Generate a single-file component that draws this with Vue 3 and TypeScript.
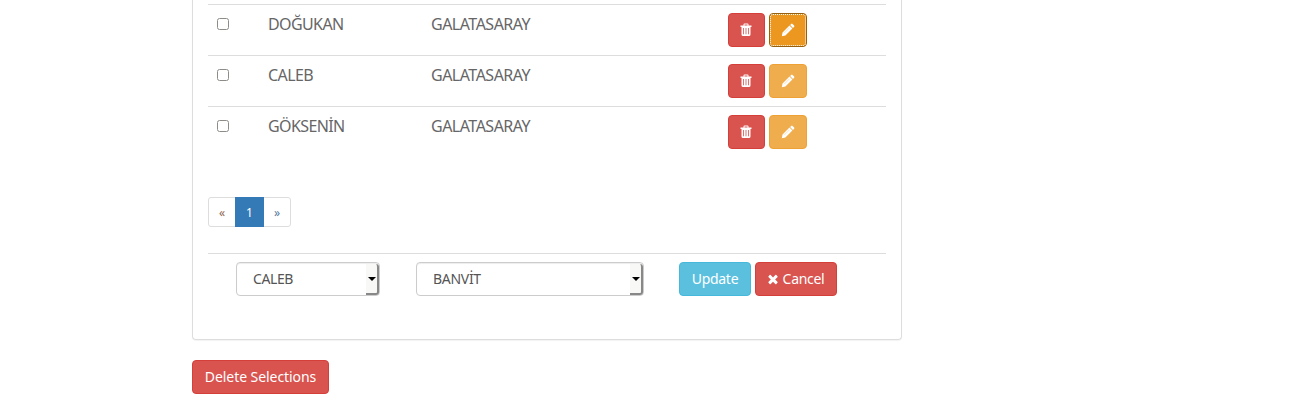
<script setup lang="ts">
import { ref } from 'vue'

interface Player {
  name: string
  team: string
  focused?: boolean
}

const players: Player[] = [
  { name: 'DOĞUKAN', team: 'GALATASARAY', focused: true },
  { name: 'CALEB', team: 'GALATASARAY' },
  { name: 'GÖKSENİN', team: 'GALATASARAY' },
]
const player = ref('CALEB')
const team = ref('BANVİT')
</script>

<template>
  <main class="page">
    <section class="panel">
      <div class="rows">
        <div v-for="p in players" :key="p.name" class="row">
          <input type="checkbox" class="check" />
          <span class="name">{{ p.name }}</span>
          <span class="team">{{ p.team }}</span>
          <div class="actions">
            <button class="btn danger trash" aria-label="Delete">
              <svg class="icon" viewBox="0 0 14 14">
                <path fill-rule="evenodd" d="M1.500 2.500H4.500V1.500Q4.500 .5 5.500 .5H8.500Q9.500 .5 9.500 1.500V2.500H12.500V4H11.500V11.500Q11.500 13 10 13H4Q2.500 13 2.500 11.500V4H1.500ZM5.500 2.500H8.500V1.500H5.500ZM4.200 5V11.200H5V5ZM6.600 5V11.200H7.400V5ZM9 5V11.200H9.800V5Z" />
              </svg>
            </button>
            <button class="btn warning" :class="{ focused: p.focused }" aria-label="Edit">
              <svg class="icon" viewBox="0 0 14 14">
                <path d="M.8 13.200 1.500 9.600 8.500 2.600 11.400 5.500 4.400 12.500ZM9.100 2 10.200.9Q10.900.3 11.600.9L13.100 2.400Q13.700 3.100 13.100 3.800L12 4.900Z" />
                <path class="shade" d="M3.400 9.900 8.600 4.700" />
              </svg>
            </button>
          </div>
        </div>
      </div>

      <nav class="pagination">
        <a class="prev">«</a>
        <a class="current">1</a>
        <a class="next">»</a>
      </nav>

      <form class="edit" @submit.prevent>
        <label class="select player">
          <select v-model="player"><option>CALEB</option></select>
          <span class="drop"></span>
        </label>
        <label class="select club">
          <select v-model="team"><option>BANVİT</option></select>
          <span class="drop"></span>
        </label>
        <button class="btn info">Update</button>
        <button class="btn danger cancel">
          <svg class="icon times" viewBox="0 0 1792 1792"><path d="M1490 1322q0 40-28 68l-136 136q-28 28-68 28t-68-28l-294-294-294 294q-28 28-68 28t-68-28l-136-136q-28-28-28-68t28-68l294-294-294-294q-28-28-28-68t28-68l136-136q28-28 68-28t68 28l294 294 294-294q28-28 68-28t68 28l136 136q28 28 28 68t-28 68l-294 294 294 294q28 28 28 68z" /></svg>
          <span>Cancel</span>
        </button>
      </form>
    </section>
    <button class="btn danger delete">Delete Selections</button>
  </main>
</template>

<style>
body {
  background: #fff;
  overflow: hidden;
}
</style>

<style scoped>
* {
  box-sizing: border-box;
}
.page {
  margin-left: 192px;
  font-family: "Noto Sans", "Open Sans", sans-serif;
  font-size: 14px;
  color: #333;
}
.panel {
  width: 710px;
  height: 340px;
  padding: 4px 15px 0;
  border: 1px solid #ddd;
  border-top: 0;
  border-radius: 0 0 4px 4px;
  box-shadow: 0 1px 1px rgba(0, 0, 0, 0.05);
}
.row {
  display: grid;
  grid-template-columns: 60px 163px 297px 1fr;
  height: 51px;
  padding-top: 8px;
  border-top: 1px solid #ddd;
  font-size: 16px;
  line-height: 23px;
  color: #666;
}
.check {
  appearance: none;
  width: 12px;
  height: 12px;
  margin: 5px 0 0 9px;
  border: 1px solid #8e8c87;
  border-radius: 2.5px;
  background: #fff;
}
.name {
  letter-spacing: -0.6px;
}
.team {
  letter-spacing: -0.5px;
}
.actions {
  display: flex;
  gap: 4px;
}
.btn {
  display: flex;
  align-items: center;
  justify-content: center;
  height: 34px;
  padding: 0;
  border: 1px solid;
  border-radius: 4px;
  color: #fff;
  font: 14px/20px "Noto Sans", "Open Sans", sans-serif;
  letter-spacing: -0.3px;
  white-space: nowrap;
}
.danger {
  background: #d9534f;
  border-color: #d43f3a;
}
.trash {
  width: 37px;
  padding-right: 1px;
}
.warning {
  width: 38px;
  background: #f0ad4e;
  border-color: #eea236;
}
.warning.focused {
  background: #ec971f;
  border-color: #985f0d;
  outline: 1px dotted #fff;
  outline-offset: -2px;
}
.icon {
  width: 14px;
  height: 14px;
  fill: #fff;
}
.shade {
  fill: none;
  stroke: #f0ad4e;
  stroke-width: 0.8;
  opacity: 0.45;
}
.pagination {
  display: flex;
  width: 83px;
  height: 30px;
  margin-top: 40px;
  border: 1px solid #ddd;
  border-radius: 3px;
  font-size: 12px;
  line-height: 30px;
  text-align: center;
  color: #337ab7;
}
.prev {
  width: 26px;
  color: #8c6650;
}
.next {
  width: 26px;
  color: #55779a;
}
.current {
  width: 29px;
  margin: -1px 0;
  line-height: 31px;
  background: #337ab7;
  color: #fff;
}
.edit {
  display: flex;
  margin-top: 26px;
  padding: 8px 0 0 28px;
  border-top: 1px solid #ddd;
}
.select {
  position: relative;
  height: 34px;
  border: 1px solid #ccc;
  border-radius: 4px;
  box-shadow: inset 0 1px 1px rgba(0, 0, 0, 0.075);
}
.select select {
  appearance: none;
  width: 100%;
  height: 32px;
  padding: 0 0 0 16px;
  border: 0;
  background: transparent;
  color: #555;
  font: 14px/20px "Noto Sans", "Open Sans", sans-serif;
  letter-spacing: -0.4px;
}
.player {
  width: 144px;
  margin-right: 36px;
}
.club {
  width: 228px;
  margin-right: 35px;
}
.club select {
  letter-spacing: -0.3px;
}
.drop {
  position: absolute;
  top: 1px;
  right: 0;
  width: 13px;
  height: 31px;
  border: solid #888;
  border-width: 0 2px 2px 0;
  border-radius: 0 3px 3px 0;
  background: #f8f8f6;
}
.drop::after {
  content: "";
  position: absolute;
  top: 13px;
  left: 2px;
  border: solid transparent;
  border-width: 4px 4px 0;
  border-top-color: #000;
}
.info {
  width: 72px;
  margin-right: 4px;
  background: #5bc0de;
  border-color: #46b8da;
}
.cancel {
  width: 82px;
}
.times {
  margin: 0 3px 0 -2px;
}
.delete {
  width: 137px;
  margin-top: 20px;
  letter-spacing: -0.06px;
}
</style>
